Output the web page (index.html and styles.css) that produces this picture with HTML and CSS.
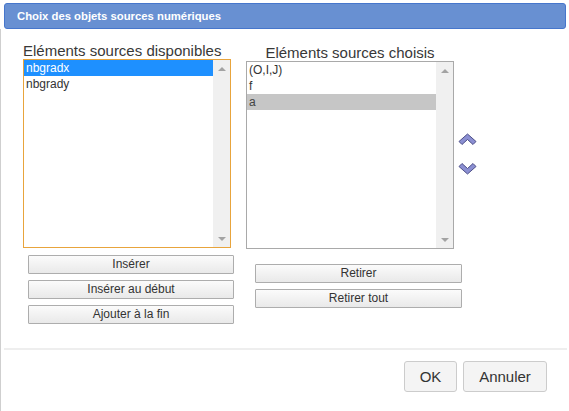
FILE: index.html
```html
<!DOCTYPE html>
<html lang="fr">
<head>
<meta charset="utf-8">
<title>Choix des objets sources numériques</title>
<link rel="stylesheet" href="styles.css">
</head>
<body>
<div class="dialog">
  <div class="titlebar">Choix des objets sources numériques</div>
  <div class="content">
    <div class="columns">
      <div class="col col-left">
        <div class="label label-left">Eléments sources disponibles</div>
        <div class="listbox listbox-left focused">
          <div class="items">
            <div class="item selected">nbgradx</div>
            <div class="item">nbgrady</div>
          </div>
          <div class="scrollbar"><span class="tri tri-up"></span><span class="tri tri-down"></span></div>
        </div>
        <div class="btns btns-left">
          <button class="btn">Insérer</button>
          <button class="btn">Insérer au début</button>
          <button class="btn">Ajouter à la fin</button>
        </div>
      </div>
      <div class="col col-right">
        <div class="label label-right">Eléments sources choisis</div>
        <div class="listbox listbox-right">
          <div class="items">
            <div class="item">(O,I,J)</div>
            <div class="item">f</div>
            <div class="item selected-grey">a</div>
          </div>
          <div class="scrollbar"><span class="tri tri-up"></span><span class="tri tri-down"></span></div>
        </div>
        <div class="btns btns-right">
          <button class="btn btn-wide">Retirer</button>
          <button class="btn btn-wide">Retirer tout</button>
        </div>
      </div>
      <div class="col col-arrows">
        <svg class="chev" width="19" height="13" viewBox="0 0 19 13"><polygon points="1,8.5 9.5,1 18,8.5 15,11.5 9.5,6.5 4,11.5" fill="#8b8fd2" stroke="#4d4f88" stroke-width="1" stroke-linejoin="round"/></svg>
        <svg class="chev chev-down" width="19" height="13" viewBox="0 0 19 13"><polygon points="1,4.5 9.5,12 18,4.5 15,1.5 9.5,6.5 4,1.5" fill="#8b8fd2" stroke="#4d4f88" stroke-width="1" stroke-linejoin="round"/></svg>
      </div>
    </div>
    <div class="separator"></div>
    <div class="footer">
      <button class="fbtn fbtn-ok">OK</button>
      <button class="fbtn fbtn-cancel">Annuler</button>
    </div>
  </div>
</div>
</body>
</html>
```

FILE: styles.css
```css
* { box-sizing: border-box; }
html, body { margin: 0; padding: 0; background: #fff; }
body { font-family: "Liberation Sans", Arial, sans-serif; color: #333; }

.dialog { width: 569px; height: 411px; overflow: hidden; }

.titlebar {
  margin: 3px 3px 0 4px;
  height: 26px;
  background: #6890d2;
  border: 1px solid #4676cc;
  border-radius: 3px;
  padding-left: 12px;
  color: #fff;
  font-weight: bold;
  font-size: 11.3px;
  line-height: 24px;
}

.content {
  border-left: 1px solid #cfcfcf;
  height: 382px;
}

.columns { display: flex; align-items: flex-start; padding-top: 13px; }

.col { display: flex; flex-direction: column; align-items: flex-start; }
.col-left { margin-left: 22px; width: 208px; }
.col-right { margin-left: 15px; width: 208px; padding-top: 2px; }
.col-arrows { margin-left: 4px; padding-top: 91px; gap: 16px; }

.label { font-size: 15px; line-height: 17px; color: #383838; white-space: nowrap; }
.label-right { width: 208px; text-align: center; }

.listbox {
  display: flex;
  width: 208px;
  background: #fff;
  border: 1px solid #a9a9a9;
}
.listbox-left { height: 189px; }
.listbox-right { height: 188px; }
.focused { border-color: #e8a43c; }

.items { flex: 1; }
.item {
  height: 16px;
  line-height: 16px;
  font-size: 12px;
  padding-left: 2px;
  color: #333;
  white-space: nowrap;
}
.selected { background: #1e90ff; color: #fff; }
.selected-grey { background: #c6c6c6; color: #444; }

.scrollbar {
  width: 17px;
  background: #f0f0f0;
  display: flex;
  flex-direction: column;
  justify-content: space-between;
  align-items: center;
  padding: 7px 0 6px;
}
.tri { width: 0; height: 0; border-left: 4px solid transparent; border-right: 4px solid transparent; }
.tri-up { border-bottom: 4px solid #a3a3a3; }
.tri-down { border-top: 4px solid #a3a3a3; }

.btns { display: flex; flex-direction: column; gap: 6px; }
.btns-left { margin: 7px 0 0 5px; }
.btns-right { margin: 15px 0 0 9px; }

.btn {
  width: 206px;
  height: 19px;
  padding: 0;
  margin: 0;
  font-family: "Liberation Sans", Arial, sans-serif;
  font-size: 12px;
  font-weight: normal;
  color: #333;
  line-height: 17px;
  border: 1px solid #adadad;
  border-radius: 1px;
  background: linear-gradient(#fbfbfb, #e9e9e9);
}
.btn-wide { width: 207px; }

.chev { display: block; }

.separator {
  margin: 24px 0 0 3px;
  width: 563px;
  height: 2px;
  background: #eeeeee;
}

.footer {
  display: flex;
  justify-content: flex-end;
  gap: 6px;
  padding: 11px 22px 0 0;
}
.fbtn {
  height: 31px;
  padding: 0;
  font-family: "Liberation Sans", Arial, sans-serif;
  font-size: 15px;
  font-weight: normal;
  color: #333;
  background: #f4f4f4;
  border: 1px solid #cccccc;
  border-radius: 3px;
}
.fbtn-ok { width: 53px; }
.fbtn-cancel { width: 84px; }
```
